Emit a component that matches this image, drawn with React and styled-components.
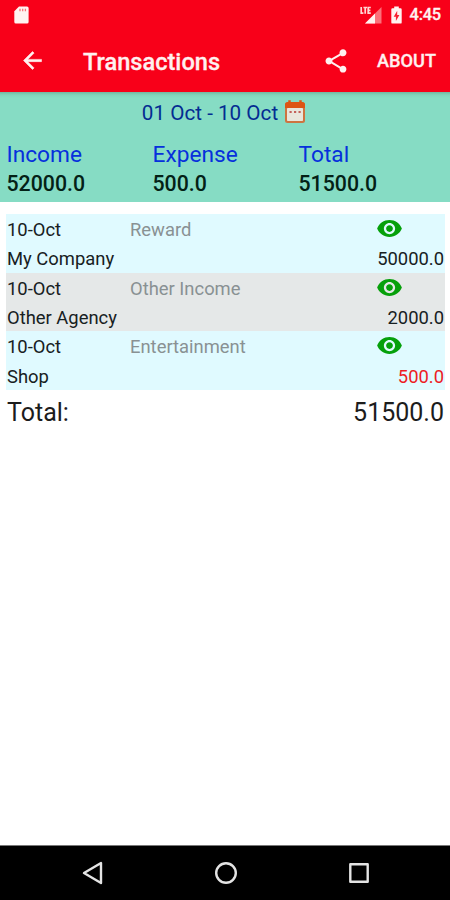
import styled, { createGlobalStyle } from "styled-components";

// styled-components
const GlobalStyle = createGlobalStyle`
  body {
    margin: 0;
    background: #fff;
    font-family: Roboto, sans-serif;
  }
`

const StScreen = styled.div`
  display: flex;
  flex-direction: column;
  width: 450px;
  height: 900px;
  overflow: hidden;
  background: #fff;
`

const StStatusBar = styled.div`
  display: flex;
  align-items: center;
  height: 29px;
  padding: 0 9px 0 14px;
  box-sizing: border-box;
  background: #f80019;
  color: #fff3f1;
`

const StStatusIcon = styled.svg`
  display: block;
  flex: none;
  margin-right: ${(props) => props.$gap}px;
`

const StStatusRight = styled.div`
  display: flex;
  align-items: center;
  margin-left: auto;
`

const StTime = styled.span`
  font-size: 16.4px;
  font-weight: 500;
  letter-spacing: -0.2px;
  line-height: 31px;
  -webkit-text-stroke: 0.3px currentColor;
`

const StToolbar = styled.div`
  display: flex;
  align-items: center;
  height: 63px;
  padding: 0 14px 0 19px;
  box-sizing: border-box;
  background: #f80019;
  color: #fff0ef;
`

const StTitle = styled.h1`
  flex: 1;
  margin: 2px 0 0 37px;
  font-size: 23.6px;
  font-weight: 500;
  line-height: 30px;
  -webkit-text-stroke: 0.3px currentColor;
`

const StAbout = styled.span`
  margin-left: 27px;
  font-size: 18.2px;
  font-weight: 500;
  line-height: 30px;
  -webkit-text-stroke: 0.3px currentColor;
`

const StIcon = styled.svg`
  display: block;
  flex: none;
  fill: currentColor;
`

const StSummary = styled.div`
  height: 110px;
  box-sizing: border-box;
  background: linear-gradient(#75b5a0, #82d4bb 3px, #86dcc4 6px);
`

const StDate = styled.div`
  display: flex;
  justify-content: center;
  align-items: center;
  height: 42px;
  padding-right: 2px;
  font-size: 20.7px;
  line-height: 42px;
  color: #042c92;

  svg {
    margin: 0 0 3px 6px;
  }
`

const StSumGrid = styled.div`
  display: grid;
  grid-template-columns: 146px 146px 1fr;
  padding: 6px 0 0 6.5px;
`

const StSumLabel = styled.div`
  font-size: 22.7px;
  line-height: 30px;
  color: #0630dc;
`

const StSumValue = styled.div`
  font-size: 21.3px;
  font-weight: 500;
  line-height: 28px;
  color: #032116;
`

const StList = styled.div`
  padding: 12px 5px 0 6px;
`

const StItem = styled.div`
  display: grid;
  grid-template-columns: 123px 1fr auto;
  grid-template-rows: 29.35px 29.35px;
  padding: 0 1px;
  background: ${(props) => (props.$odd ? "#e5e8e8" : "#e0faff")};
  font-size: 18.4px;
  line-height: 32px;
  color: #172022;
`

const StCategory = styled.span`
  color: #899193;
`

const StEye = styled.span`
  padding: 1px 41px 0 0;
  color: #06a00b;
`

const StName = styled.span`
  grid-column: 1 / 3;
`

const StAmount = styled.span`
  text-align: right;
  color: ${(props) => (props.$expense ? "#ed1c24" : "#172022")};
`

const StTotal = styled.div`
  display: flex;
  justify-content: space-between;
  padding: 0 6px 0 7px;
  font-size: 25px;
  line-height: 45px;
  color: #1c1c1c;
`

const StNavBar = styled.div`
  display: flex;
  justify-content: space-between;
  align-items: center;
  height: 55px;
  margin-top: auto;
  padding: 0 79px 1px 81px;
  box-sizing: border-box;
  border-top: 1px solid #777;
  background: #000;

  svg {
    display: block;
    fill: none;
    stroke: #e4e4e4;
    stroke-width: 2.4;
    stroke-linejoin: round;
  }
`

const sums = [
  { label: "Income", value: "52000.0" },
  { label: "Expense", value: "500.0" },
  { label: "Total", value: "51500.0" },
];

const items = [
  { date: "10-Oct", category: "Reward", name: "My Company", amount: "50000.0" },
  { date: "10-Oct", category: "Other Income", name: "Other Agency", amount: "2000.0" },
  { date: "10-Oct", category: "Entertainment", name: "Shop", amount: "500.0", expense: true },
];

function StatusBar() {
  return (
    <StStatusBar>
      <StStatusIcon $gap={0} width="15" height="18" viewBox="0 0 15 18">
        <path d="M5 .5H13a1.6 1.6 0 0 1 1.6 1.6V16a1.6 1.6 0 0 1-1.6 1.6H1.9A1.6 1.6 0 0 1 .3 16V5.2z" fill="currentColor" />
        <path d="M6 2.7v2.6M8.7 2.7v2.6M11.4 2.7v2.6" stroke="#f87078" strokeWidth="1.3" />
      </StStatusIcon>
      <StStatusRight>
        <StStatusIcon $gap={9} width="22" height="18" viewBox="0 0 22 18">
          <path d="M21.5 1v16.5H5z" fill="#fb707a" />
          <path d="M15 7.5v10H5z" fill="currentColor" />
          <path d="M0 0h11.5v8.5H0z" fill="#f80019" />
          <path d="M1.2 1v6.2h2.2M3.4 1.5h3.6M5.2 1.5V7.8M10.8 1.5H8.2v5.7h2.6M8.2 4.4h2.2" fill="none" stroke="#ffd5d3" strokeWidth="1.7" />
        </StStatusIcon>
        <StStatusIcon $gap={8} width="11" height="18" viewBox="0 0 11 18">
          <path d="M3.2 0.5h4.6v1.7h1.7a1.2 1.2 0 0 1 1.2 1.2v13a1.2 1.2 0 0 1-1.2 1.2h-8a1.2 1.2 0 0 1-1.2-1.2v-13a1.2 1.2 0 0 1 1.2-1.2h1.7z" fill="currentColor" />
          <path d="M6.2 4.8 2.7 10.7h2.2v4.4l3.5-6H6.2z" fill="#f82030" />
        </StStatusIcon>
        <StTime>4:45</StTime>
      </StStatusRight>
    </StStatusBar>
  );
}

function CalendarIcon() {
  return (
    <svg width="22" height="24" viewBox="0 0 22 24">
      <rect x="1" y="2.5" width="20" height="20.5" rx="2.5" fill="#cd7440" />
      <path d="M1 8V4.5a2.5 2.5 0 0 1 2.5-2.5h15a2.5 2.5 0 0 1 2.5 2.5V8z" fill="#dd5514" />
      <path d="M5.5.3v4M16.5.3v4" stroke="#dd5514" strokeWidth="2.5" />
      <rect x="3" y="8" width="16" height="13" rx=".8" fill="#e9e6dc" />
      <path d="M5.5 12h2.2M10 12h2.2M14.5 12h2.2" stroke="#c4605a" strokeWidth="2.2" />
    </svg>
  );
}

function App() {
  return (
    <>
      <GlobalStyle />
      <StScreen>
        <StatusBar />
        <StToolbar>
          <StIcon width="27" height="27" viewBox="0 0 24 24">
            <path d="M20 11H7.83l5.59-5.59L12 4l-8 8 8 8 1.41-1.41L7.83 13H20v-2z" stroke="currentColor" strokeWidth=".5" />
          </StIcon>
          <StTitle>Transactions</StTitle>
          <StIcon width="28" height="28" viewBox="0 0 24 24">
            <path d="M18 16.08c-.76 0-1.44.3-1.96.77L8.91 12.7c.05-.23.09-.46.09-.7s-.04-.47-.09-.7l7.05-4.11c.54.5 1.25.81 2.04.81 1.66 0 3-1.34 3-3s-1.34-3-3-3-3 1.34-3 3c0 .24.04.47.09.7L8.04 9.81C7.5 9.31 6.79 9 6 9c-1.66 0-3 1.34-3 3s1.34 3 3 3c.79 0 1.5-.31 2.04-.81l7.12 4.16c-.05.21-.08.43-.08.65 0 1.61 1.31 2.92 2.92 2.92s2.92-1.31 2.92-2.92-1.31-2.92-2.92-2.92z" />
          </StIcon>
          <StAbout>ABOUT</StAbout>
        </StToolbar>

        <StSummary>
          <StDate>
            01 Oct - 10 Oct
            <CalendarIcon />
          </StDate>
          <StSumGrid>
            {sums.map((sum) => (
              <div key={sum.label}>
                <StSumLabel>{sum.label}</StSumLabel>
                <StSumValue>{sum.value}</StSumValue>
              </div>
            ))}
          </StSumGrid>
        </StSummary>

        <StList>
          {items.map((item, i) => (
            <StItem key={item.name} $odd={i % 2 === 1}>
              <span>{item.date}</span>
              <StCategory>{item.category}</StCategory>
              <StEye>
                <StIcon width="27" height="27" viewBox="0 0 24 24">
                  <path d="M12 4.5C7 4.5 2.73 7.61 1 12c1.73 4.39 6 7.5 11 7.5s9.27-3.11 11-7.5c-1.73-4.39-6-7.5-11-7.5zM12 17c-2.76 0-5-2.24-5-5s2.24-5 5-5 5 2.24 5 5-2.24 5-5 5zm0-8c-1.66 0-3 1.34-3 3s1.34 3 3 3 3-1.34 3-3-1.34-3-3-3z" />
                </StIcon>
              </StEye>
              <StName>{item.name}</StName>
              <StAmount $expense={item.expense}>{item.amount}</StAmount>
            </StItem>
          ))}
        </StList>
        <StTotal>
          <span>Total:</span>
          <span>51500.0</span>
        </StTotal>

        <StNavBar>
          <svg width="24" height="24" viewBox="0 0 24 24">
            <path d="M20 2v20L3 12z" />
          </svg>
          <svg width="24" height="24" viewBox="0 0 24 24">
            <circle cx="12" cy="12" r="9.8" />
          </svg>
          <svg width="24" height="24" viewBox="0 0 24 24">
            <rect x="3.3" y="3.3" width="17.4" height="17.4" />
          </svg>
        </StNavBar>
      </StScreen>
    </>
  );
}

export default App;
